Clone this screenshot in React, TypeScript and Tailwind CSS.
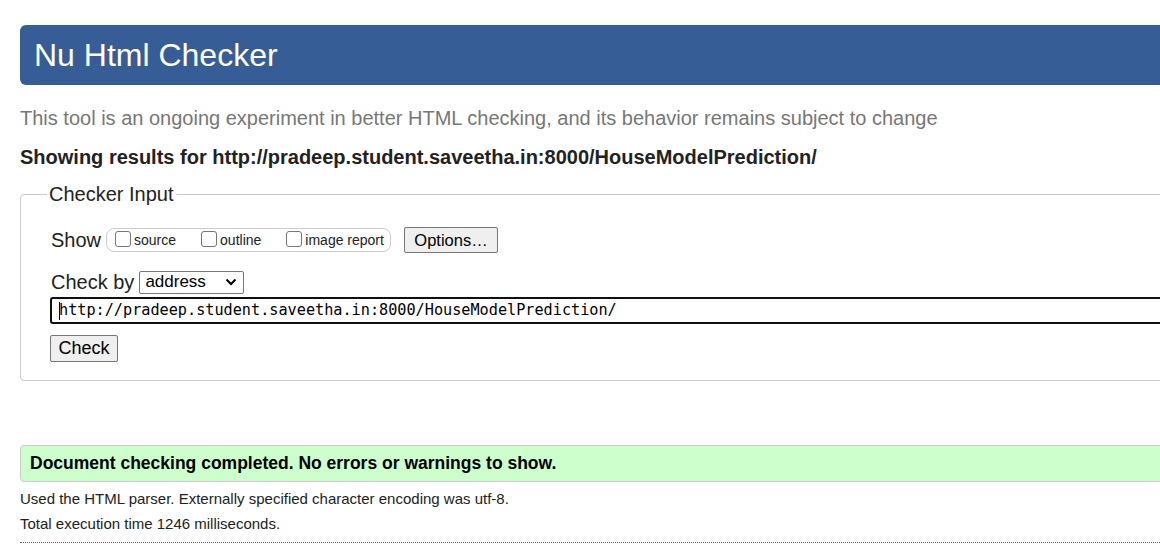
import React from 'react';

const Box: React.FC = () => (
  <span className="inline-block w-[16px] h-[16px] border border-[#767676] rounded-[3px] bg-white mr-[3px] -translate-y-[1px]" />
);

const Btn: React.FC<{ children: React.ReactNode; className?: string }> = ({ children, className = '' }) => (
  <span
    className={`inline-flex items-center justify-center bg-[#efefef] border border-[#767676] rounded-[2px] text-black ${className}`}
  >
    {children}
  </span>
);

const App: React.FC = () => {
  const url = 'http://pradeep.student.saveetha.in:8000/HouseModelPrediction/';
  return (
    <div className="w-[1160px] h-[556px] overflow-hidden bg-white font-['Liberation_Sans',Arial,sans-serif] text-[#222]">
      <div className="w-[1200px] pl-[20px] pt-[25px]">
        {/* header */}
        <div className="h-[60px] bg-[#365d95] rounded-[6px] flex items-center pl-[14px]">
          <h1 className="text-[32px] text-white leading-none">Nu Html Checker</h1>
        </div>

        <p className="mt-[22px] text-[20px] text-[#777] leading-[22px]">
          This tool is an ongoing experiment in better HTML checking, and its behavior remains subject to change
        </p>
        <p className="mt-[17px] text-[20px] font-bold leading-[22px]">Showing results for {url}</p>

        {/* checker input */}
        <fieldset className="mt-[15px] border border-[#ccc] rounded-[4px] pl-[29px] pr-[30px] pt-[12px] h-[198px]">
          <legend className="text-[20px] px-[2px] ml-[-3px] leading-[22px]">Checker Input</legend>
          <div className="flex items-center h-[26px] mt-[10px]">
            <span className="text-[20px] ml-px mr-[5px]">Show</span>
            <div className="h-[24px] w-[285px] border border-[#ccc] rounded-[8px] flex items-center text-[14px] pl-[8px]">
              <Box />
              <span className="mr-[25px]">source</span>
              <Box />
              <span className="mr-[25px]">outline</span>
              <Box />
              <span>image report</span>
            </div>
            <Btn className="ml-[13px] w-[94px] h-[26px] text-[16.5px]">Options…</Btn>
          </div>
          <div className="flex items-center mt-[18px] h-[22px]">
            <span className="text-[20px] ml-px mr-[5px]">Check by</span>
            <div className="w-[105px] h-[23px] border border-[#767676] rounded-[2px] flex items-center justify-between pl-[5px] pr-[6px] text-[17px] text-black">
              <span>address</span>
              <svg width="12" height="8" viewBox="0 0 12 8" fill="none">
                <path d="M1.5 1.5 6 6l4.5-4.5" stroke="#000" strokeWidth="2" />
              </svg>
            </div>
          </div>
          <div className="mt-[4px] -mr-[100px] h-[27px] border-2 border-[#101010] rounded-[3px] flex items-center pl-[7px] font-['DejaVu_Sans_Mono',monospace] text-[15.2px] text-black">
            <span className="w-px h-[18px] bg-black -mr-px" />
            {url}
          </div>
          <Btn className="mt-[11px] w-[68px] h-[27px] text-[18px]">Check</Btn>
        </fieldset>

        {/* result */}
        <div className="mt-[64px] h-[37px] bg-[#ccffcc] border border-[#ccc] rounded-[4px] flex items-center pl-[9px] text-[17.5px] font-bold text-black">
          Document checking completed. No errors or warnings to show.
        </div>
        <p className="mt-[8px] text-[15px] leading-[18px]">
          Used the HTML parser. Externally specified character encoding was utf-8.
        </p>
        <p className="mt-[7px] text-[15px] leading-[18px]">Total execution time 1246 milliseconds.</p>
        <div className="mt-[9px] border-t border-dotted border-[#666]" />
      </div>
    </div>
  );
};

export default App;
